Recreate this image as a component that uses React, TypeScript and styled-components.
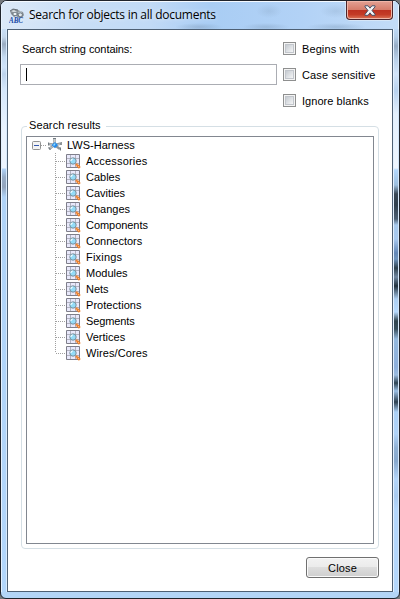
import React from "react";
import styled, { createGlobalStyle } from "styled-components";

const GlobalStyle = createGlobalStyle`
  * { box-sizing: border-box; }
  body { margin: 0; background: #74787c; overflow: hidden; }
`;

const Window = styled.div`
  width: 400px;
  height: 599px;
  border: 1px solid #20242c;
  border-radius: 7px 7px 6px 6px;
  overflow: hidden;
  display: flex;
  flex-direction: column;
  background: #b3d5f7;
  color: #000;
  font: 11px/16px "Liberation Sans", Arial, sans-serif;
`;

const TitleBar = styled.header`
  height: 28px;
  flex: none;
  display: flex;
  align-items: flex-start;
  padding: 0 6px 0 7px;
  box-shadow: inset 0 1px #f4f9ff, inset 1px 0 #e8f3ff, inset -1px 0 #e8f3ff;
  background:
    radial-gradient(ellipse 24px 4px at 198px 26px, #8ba8c899, transparent),
    radial-gradient(ellipse 24px 4px at 265px 26px, #8ba8c888, transparent),
    radial-gradient(ellipse 30px 4px at 335px 26px, #8ba8c888, transparent),
    radial-gradient(ellipse 13px 7px at 268px 10px, #8ba8c855, transparent),
    radial-gradient(ellipse 16px 7px at 335px 10px, #8ba8c855, transparent),
    linear-gradient(90deg, #dce9f8 0, #c8def6 80px, #c1daf6 150px, #a9cdf4 210px, #b2d2f6 300px, #c3dcf7 100%);
`;

const TitleIcon = styled.svg`
  width: 16px;
  height: 16px;
  margin-top: 7px;
  margin-left: 1px;
  flex: none;
`;

const Title = styled.h1`
  margin: 5px 0 0 4px;
  flex: 1;
  font: 400 12px/17px "Open Sans", "Noto Sans", sans-serif;
  letter-spacing: -0.26px;
  white-space: nowrap;
  text-shadow: 0 0 5px #ffffffcc;
`;

const WindowClose = styled.button`
  width: 47px;
  height: 19px;
  padding: 0;
  border: 1px solid #4c252c;
  border-top: 0;
  border-radius: 0 0 4px 4px;
  box-shadow: inset 0 0 0 1px #f0b6a8, 0 0 0 1px #e3edf8aa;
  background: linear-gradient(#e3a194 0, #d67d6b 48%, #bd3020 50%, #c43b26 75%, #dc7558 100%);
  display: flex;
  align-items: center;
  justify-content: center;
`;

const Body = styled.div`
  flex: none;
  height: 563px;
  display: grid;
  grid-template-columns: 6px 386px 6px;
`;

const LeftEdge = styled.div`
  box-shadow: inset 1px 0 #e4f1ff, inset -1px 0 #d8eafc;
  background: linear-gradient(#cadff6 0, #c4d7ec 8px, #9aacc1 15px, #c5daf1 28px, #cfe3fa 38px, #bdd3ec 45px, #d5e7fb 60px, #e9f3ff 100px, #edf5ff 139px, #b0d3f8 140px, #97adc8 148px, #93a5bd 158px, #b0d3f7 168px, #b2d6fb 100%);
`;

const RightEdge = styled.div`
  box-shadow: inset 1px 0 #e4f1ff, inset -1px 0 #d4e7fb;
  background: linear-gradient(#bdd8f5 0, #b4cee9 8px, #96acc5 17px, #b8cfe8 30px, #d3e5fa 45px, #b9d2ee 62px, #e4f0fd 85px, #eff6ff 139px, #b3d8fd 141px, #9dbfdf 156px, #3a4856 165px, #31404e 176px, #4d6074 190px, #a6c8eb 196px, #a8c9ef 210px, #6387b6 224px, #6f94bd 230px, #2f414d 239px, #7087a0 248px, #22323f 257px, #abcdf0 270px, #b6d9fd 283px, #2f434e 292px, #374e5d 300px, #93b8dd 310px, #8dafdb 338px, #9bbce0 346px, #2d4352 354px, #9bbfe4 362px, #2d4050 373px, #abd0f5 383px, #b0d3f8 405px, #8fb0d3 419px, #87a8cd 432px, #b3d5f9 450px, #a8caef 467px, #b4d7fc 480px, #b4d7fc 100%);
`;

const Client = styled.main`
  border: 1px solid #4e6074;
  background: #fff;
  padding: 10px 13px 13px;
  display: flex;
  flex-direction: column;
`;

const SearchArea = styled.section`
  height: 79px;
  flex: none;
  display: grid;
  grid-template-columns: 256px 1fr;
  column-gap: 6px;
  margin-left: -1px;
`;

const Field = styled.label`
  display: flex;
  flex-direction: column;
  padding-top: 1px;
`;

const Text = styled.span<{ $spacing?: number }>`
  letter-spacing: ${(p) => p.$spacing ?? 0}px;
  white-space: nowrap;
`;

const FieldLabel = styled(Text)`
  margin-left: 2px;
`;

const FieldBox = styled.div`
  width: 257px;
  height: 21px;
  margin-top: 7px;
  border: 1px solid #abadb3;
  display: flex;
  align-items: center;
  padding-left: 5px;
`;

const Caret = styled.i`
  width: 1px;
  height: 13px;
  background: #000;
`;

const Options = styled.div`
  display: flex;
  flex-direction: column;
  gap: 10px;
  padding-top: 1px;
  margin-left: 1px;
`;

const Option = styled.label`
  height: 16px;
  display: flex;
  align-items: center;
  gap: 6px;
`;

const CheckBox = styled.i`
  width: 13px;
  height: 13px;
  flex: none;
  margin-top: -2px;
  border: 1px solid #8e8f8f;
  background: linear-gradient(135deg, #c6cbd1, #f4f5f6) content-box, #f4f4f4;
  padding: 2px;
  box-shadow: inset 0 0 0 1px #f4f4f4, inset 0 0 0 2px #c2c6cc;
`;

const Results = styled.fieldset`
  margin: 0;
  min-width: 0;
  width: 358px;
  height: 430px;
  flex: none;
  padding: 3px 4px 4px;
  border: 1px solid #d5dfe5;
  border-radius: 4px;
`;

const Legend = styled.legend`
  margin-left: 1px;
  padding: 0 5px 0 2px;
  height: 14px;
  line-height: 12px;
  letter-spacing: 0.1px;
`;

const Tree = styled.div`
  height: 408px;
  border: 1px solid #828790;
  padding: 0 5px;
`;

const Row = styled.div`
  height: 16px;
  display: flex;
  align-items: center;
`;

const Dots = styled.i<{ $width: number }>`
  width: ${(p) => p.$width}px;
  height: 1px;
  background: repeating-linear-gradient(90deg, #a0a0a0 0 1px, transparent 1px 2px);
`;

const Children = styled.div`
  margin-left: 23px;
`;

const Branch = styled.i<{ $last: boolean }>`
  width: 1px;
  height: ${(p) => (p.$last ? 8 : 16)}px;
  align-self: flex-start;
  background: repeating-linear-gradient(#a0a0a0 0 1px, transparent 1px 2px);
`;

const Icon = styled.svg<{ $gap: number }>`
  width: 16px;
  height: 16px;
  flex: none;
  margin-right: ${(p) => p.$gap}px;
`;

const Footer = styled.footer`
  display: flex;
  justify-content: flex-end;
  margin-top: 8px;
`;

const Button = styled.button`
  width: 73px;
  height: 21px;
  padding: 0;
  border: 1px solid #707070;
  border-radius: 3px;
  background: linear-gradient(#f2f2f2 0, #ebebeb 48%, #dddddd 50%, #cfcfcf 100%);
  box-shadow: inset 0 0 0 1px #fafafa;
  color: #000;
  font: inherit;
  letter-spacing: 0.15px;
  line-height: 18px;
`;

const SearchAbcIcon = () => (
  <TitleIcon viewBox="0 0 16 16">
    <path d="M1 3 4 1l5 1 2 1 3 1 1 3-2 3-3 0-3-2-2 1-3-3z" fill="#8a9298" />
    <path d="m2 3 3-1 3 2-2 1z" fill="#d7dde1" />
    <path d="m9 4 3-1 1 2-3 1z" fill="#b7c4cc" />
    <path d="M1 3 4 1l5 1" fill="none" stroke="#555e66" strokeWidth=".8" />
    <ellipse cx="6" cy="6" rx="2.1" ry="1.7" fill="#eef3f5" stroke="#55616c" strokeWidth=".7" />
    <ellipse cx="11.3" cy="6.8" rx="2.1" ry="1.9" fill="#e2e9ed" stroke="#55616c" strokeWidth=".7" />
    <text x="0" y="15" fill="#1748a5" fontFamily="Liberation Serif, serif" fontSize="7.5" fontWeight="700" fontStyle="italic" textLength="14" lengthAdjust="spacingAndGlyphs">ABC</text>
  </TitleIcon>
);

const CloseGlyph = () => (
  <svg width="12" height="11" viewBox="0 0 12 11">
    <path d="M1 .8h3.1L6 3.2 7.9.8H11v1L8 5.5l3 3.8v1H7.9L6 7.8l-1.9 2.5H1v-1l3-3.8-3-3.7z" fill="#f5f6f8" stroke="#495267" />
  </svg>
);

const Expander = () => (
  <svg width="9" height="9" viewBox="0 0 9 9">
    <rect x=".5" y=".5" width="8" height="8" rx="1" fill="#f3f3f3" stroke="#919191" />
    <path d="M2 4.5h5" stroke="#3458ae" />
  </svg>
);

const HarnessIcon = () => (
  <Icon viewBox="0 0 16 16" $gap={4}>
    <path d="M7.5 1.5v6M7.5 8 2 12M7.5 8l5.5 4M2 7l6 1M14 6.5 8 8" stroke="#8f9599" strokeWidth="2.4" />
    <path d="M7.5 2v5M2.5 7l4 .8M13 7 8 8M3 11l4-2" stroke="#cdd1d4" strokeWidth=".9" />
    <path d="M6 1.5h3M1.5 5.5v3M14.3 5v3M1.5 10.5l2 2.5M13.5 10.5v3" stroke="#737b81" />
    <path d="m8 5 3 3-3 3.3L4.5 8z" fill="#2589e9" />
    <path d="M7 6.5h1.5v1H7zM6 7.5h2v1H6z" fill="#8edbff" />
  </Icon>
);

const CategoryIcon = () => (
  <Icon viewBox="0 0 16 16" $gap={5}>
    <path d="M1.5 1.5h13v13h-13z" fill="#e9e9fb" stroke="#7f7f8b" />
    <path d="M5.5 2v12M10.5 2v12M2 5.5h12M2 10.5h12" stroke="#b2b2c0" />
    <path d="m11 11 3.8 3.8" stroke="#ed812f" strokeWidth="2.6" />
    <path d="m11.5 12.5 1-1m.5 2.5 1-1" stroke="#ffd09a" strokeWidth=".8" />
    <circle cx="8" cy="8" r="3.2" fill="#94dcf8" stroke="#74858f" strokeWidth=".9" />
    <path d="M6 8q0-2 2-2" stroke="#effcff" strokeWidth="1.2" fill="none" />
  </Icon>
);

const options = [
  { name: "Begins with", spacing: 0.1 },
  { name: "Case sensitive", spacing: 0.15 },
  { name: "Ignore blanks", spacing: 0.05 },
];

const categories = [
  { name: "Accessories", spacing: 0.2 },
  { name: "Cables", spacing: 0 },
  { name: "Cavities", spacing: 0 },
  { name: "Changes", spacing: 0 },
  { name: "Components", spacing: -0.05 },
  { name: "Connectors", spacing: 0 },
  { name: "Fixings", spacing: 0.2 },
  { name: "Modules", spacing: 0 },
  { name: "Nets", spacing: 0 },
  { name: "Protections", spacing: 0.05 },
  { name: "Segments", spacing: -0.1 },
  { name: "Vertices", spacing: 0 },
  { name: "Wires/Cores", spacing: 0.1 },
];

export default function App() {
  return (
    <>
      <GlobalStyle />
      <Window>
        <TitleBar>
          <SearchAbcIcon />
          <Title>Search for objects in all documents</Title>
          <WindowClose aria-label="Close window"><CloseGlyph /></WindowClose>
        </TitleBar>
        <Body>
          <LeftEdge />
          <Client>
            <SearchArea>
              <Field>
                <FieldLabel $spacing={-0.07}>Search string contains:</FieldLabel>
                <FieldBox><Caret /></FieldBox>
              </Field>
              <Options>
                {options.map((o) => (
                  <Option key={o.name}><CheckBox /><Text $spacing={o.spacing}>{o.name}</Text></Option>
                ))}
              </Options>
            </SearchArea>
            <Results>
              <Legend>Search results</Legend>
              <Tree>
                <Row><Expander /><Dots $width={6} /><HarnessIcon /><Text>LWS-Harness</Text></Row>
                <Children>
                  {categories.map((c, i) => (
                    <Row key={c.name}>
                      <Branch $last={i === categories.length - 1} />
                      <Dots $width={9} />
                      <CategoryIcon />
                      <Text $spacing={c.spacing}>{c.name}</Text>
                    </Row>
                  ))}
                </Children>
              </Tree>
            </Results>
            <Footer><Button>Close</Button></Footer>
          </Client>
          <RightEdge />
        </Body>
      </Window>
    </>
  );
}
